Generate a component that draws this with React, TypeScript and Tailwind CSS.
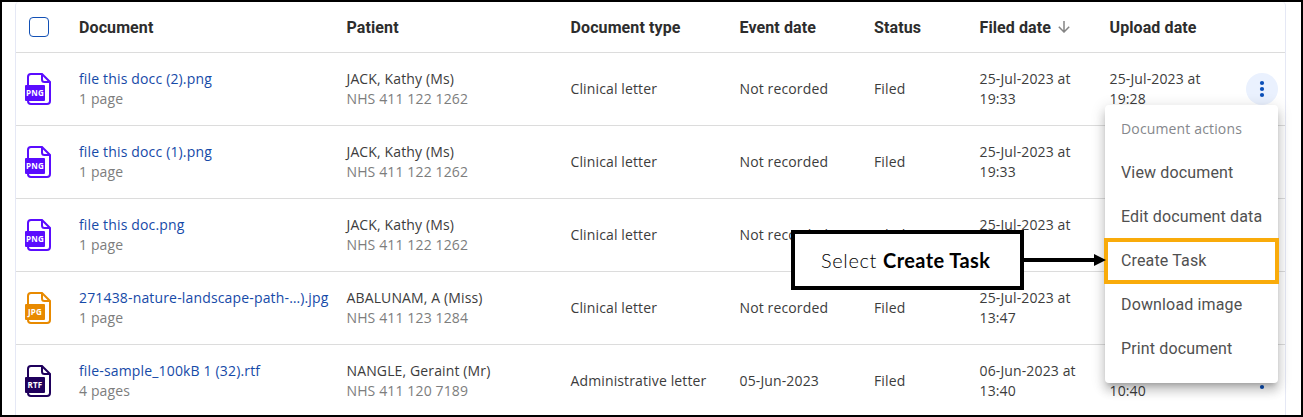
import React from 'react';

type FileKind = 'PNG' | 'JPG' | 'RTF';

interface DocumentRow {
  kind: FileKind;
  name: string;
  pages: string;
  patient: string;
  nhs: string;
  type: string;
  eventDate: string;
  status: string;
  filed: [string, string];
  uploaded: [string, string];
}

const kindColors: Record<FileKind, string> = {
  PNG: '#5a0cff',
  JPG: '#e88a00',
  RTF: '#1f005c',
};

const rows: DocumentRow[] = [
  {
    kind: 'PNG',
    name: 'file this docc (2).png',
    pages: '1 page',
    patient: 'JACK, Kathy (Ms)',
    nhs: 'NHS 411 122 1262',
    type: 'Clinical letter',
    eventDate: 'Not recorded',
    status: 'Filed',
    filed: ['25-Jul-2023 at', '19:33'],
    uploaded: ['25-Jul-2023 at', '19:28'],
  },
  {
    kind: 'PNG',
    name: 'file this docc (1).png',
    pages: '1 page',
    patient: 'JACK, Kathy (Ms)',
    nhs: 'NHS 411 122 1262',
    type: 'Clinical letter',
    eventDate: 'Not recorded',
    status: 'Filed',
    filed: ['25-Jul-2023 at', '19:33'],
    uploaded: ['', ''],
  },
  {
    kind: 'PNG',
    name: 'file this doc.png',
    pages: '1 page',
    patient: 'JACK, Kathy (Ms)',
    nhs: 'NHS 411 122 1262',
    type: 'Clinical letter',
    eventDate: 'Not recorded',
    status: 'Filed',
    filed: ['25-Jul-2023 at', ''],
    uploaded: ['', ''],
  },
  {
    kind: 'JPG',
    name: '271438-nature-landscape-path-…).jpg',
    pages: '1 page',
    patient: 'ABALUNAM, A (Miss)',
    nhs: 'NHS 411 123 1284',
    type: 'Clinical letter',
    eventDate: 'Not recorded',
    status: 'Filed',
    filed: ['25-Jul-2023 at', '13:47'],
    uploaded: ['', ''],
  },
  {
    kind: 'RTF',
    name: 'file-sample_100kB 1 (32).rtf',
    pages: '4 pages',
    patient: 'NANGLE, Geraint (Mr)',
    nhs: 'NHS 411 120 7189',
    type: 'Administrative letter',
    eventDate: '05-Jun-2023',
    status: 'Filed',
    filed: ['06-Jun-2023 at', '13:40'],
    uploaded: ['', '10:40'],
  },
];

const menuItems = [
  'View document',
  'Edit document data',
  'Create Task',
  'Download image',
  'Print document',
];

const columns = 'grid grid-cols-[63px_267.5px_224px_169px_134.5px_105.5px_130px_1fr] items-center';

const FileIcon: React.FC<{ kind: FileKind }> = ({ kind }) => {
  const color = kindColors[kind];
  return (
    <svg width="26" height="32" viewBox="0 0 26 32" fill="none" className="ml-[9px]">
      <path
        d="M3 12V4a3 3 0 0 1 3-3h11l8 8v19a3 3 0 0 1-3 3H6a3 3 0 0 1-3-3v-1"
        stroke={color}
        strokeWidth="2"
      />
      <path d="M17 1v5.500a2.500 2.500 0 0 0 2.500 2.500H25" stroke={color} strokeWidth="2" />
      <rect y="12" width="20" height="16" rx="1" fill={color} />
      <text
        x="10"
        y="23"
        textAnchor="middle"
        letterSpacing="0.2"
        fontFamily="'Open Sans', sans-serif"
        fontSize="8"
        fontWeight="700"
        fill="#fff"
      >
        {kind}
      </text>
    </svg>
  );
};

const MoreButton: React.FC<{ active: boolean }> = ({ active }) => (
  <button
    className={`flex h-8 w-8 items-center justify-center mr-[7px] rounded-full ${
      active ? 'bg-[#eaf1fe]' : ''
    }`}
  >
    <svg width="4" height="16" viewBox="0 0 4 16" fill="#0b4fb8" className="overflow-visible">
      <circle cx="2" cy="2" r="2.100" />
      <circle cx="2" cy="8" r="2.100" />
      <circle cx="2" cy="14" r="2.100" />
    </svg>
  </button>
);

const ActionsMenu: React.FC = () => (
  <div className="absolute left-[1103px] top-[103px] z-10 h-[278px] w-[173px] rounded bg-white pt-0.5 font-['Roboto',sans-serif] shadow-[0_5px_5px_-3px_rgba(0,0,0,0.2),0_8px_10px_1px_rgba(0,0,0,0.14),0_3px_14px_2px_rgba(0,0,0,0.12)]">
    <div className="flex h-11 items-center pl-4 font-['Open_Sans',sans-serif] text-sm tracking-[0.15px] text-[#85878c]">
      Document actions
    </div>
    {menuItems.map((item) => (
      <button
        key={item}
        className="relative flex h-11 w-full items-center whitespace-nowrap pl-4 text-base tracking-[0.15px] text-[#505050]"
      >
        {item}
        {item === 'Create Task' && (
          <span className="absolute -inset-px border-4 border-[#f9ab0a]" />
        )}
      </button>
    ))}
  </div>
);

const Callout: React.FC = () => (
  <div className="absolute left-[789px] top-[228px] z-20 flex items-center">
    <div className="flex h-[60px] w-[233px] items-center gap-1.5 border-4 border-black bg-white pl-[26px] whitespace-nowrap font-['Lato',sans-serif] text-xl text-black">
      <span className="font-light tracking-[0.65px]">Select</span>
      <span className="font-bold tracking-[0.4px]">Create Task</span>
    </div>
    <svg width="82" height="12" viewBox="0 0 82 12">
      <path d="M0 4h70V0l12 6-12 6V8H0z" fill="#000" />
    </svg>
  </div>
);

export default function App() {
  return (
    <div className="relative h-[417px] w-[1303px] overflow-hidden border-2 border-black bg-white">
      <div className="ml-[13px] h-full w-[1271px] overflow-hidden rounded-t border-x border-[#e5e8f5] font-['Open_Sans',sans-serif] text-sm tracking-[0.13px] text-[#3c3c3c]">
        <div
          className={`${columns} h-[51px] border-b border-[#dcdcdc] font-['Roboto',sans-serif] text-base font-bold tracking-[0.1px] text-[#2d2d2d]`}
        >
          <span className="ml-[13px] h-5 w-5 rounded border border-[#1250b5]" />
          <span className="pt-0.5">Document</span>
          <span className="pt-0.5">Patient</span>
          <span className="pt-0.5">Document type</span>
          <span className="pt-0.5">Event date</span>
          <span className="pt-0.5">Status</span>
          <span className="flex items-center gap-[7px] pt-0.5">
            Filed date
            <svg
              width="12"
              height="12"
              viewBox="0 0 12 12"
              fill="none"
              stroke="#858585"
              strokeWidth="1.500"
              className="-mt-0.5"
            >
              <path d="M6 0v11M.8 5.800 6 11l5.200-5.200" />
            </svg>
          </span>
          <span className="pt-0.5">Upload date</span>
        </div>

        {rows.map((row, i) => (
          <div key={row.name} className={`${columns} h-[73px] whitespace-nowrap border-b border-[#dcdcdc]`}>
            <FileIcon kind={row.kind} />
            <div>
              <p className="tracking-[0.16px] text-[#164aa8]">{row.name}</p>
              <p className="text-[#7d7d7d]">{row.pages}</p>
            </div>
            <div>
              <p>{row.patient}</p>
              <p className="text-[#7d7d7d]">{row.nhs}</p>
            </div>
            <span>{row.type}</span>
            <span>{row.eventDate}</span>
            <span>{row.status}</span>
            <div>
              <p className="h-5">{row.filed[0]}</p>
              <p className="h-5">{row.filed[1]}</p>
            </div>
            <div className="flex items-center justify-between">
              <div>
                <p className="h-5">{row.uploaded[0]}</p>
                <p className="h-5">{row.uploaded[1]}</p>
              </div>
              <MoreButton active={i === 0} />
            </div>
          </div>
        ))}
      </div>

      <ActionsMenu />
      <Callout />
    </div>
  );
}
